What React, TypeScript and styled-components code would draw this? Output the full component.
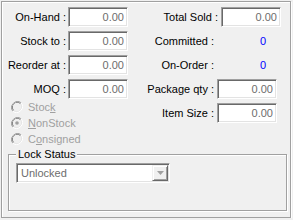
import React from "react";
import styled, { createGlobalStyle } from "styled-components";

const Global = createGlobalStyle`
  html, body { margin: 0; padding: 0; background: #f0f0f0; }
  body { font-family: "Liberation Sans", Arial, sans-serif; font-size: 11px; color: #000; }
  * { box-sizing: border-box; }
`;

const Frame = styled.div`
  margin: 1px 0 0 1px;
  width: 290px;
  height: 217px;
  border: 1px solid #a0a0a0;
  box-shadow: inset 1px 1px 0 #fff, 1px 1px 0 #fff;
  display: flex;
  flex-direction: column;
`;

const Top = styled.div`
  display: flex;
  padding: 5px 9px 0 2px;
`;

const LeftCol = styled.div`
  display: flex;
  flex-direction: column;
`;

const FieldGrid = styled.div`
  display: grid;
  grid-template-columns: 62px 60px;
  column-gap: 2px;
  row-gap: 4px;
  align-items: center;
`;

const Label = styled.span`
  text-align: right;
  white-space: nowrap;
  line-height: 20px;
`;

const Field = styled.input`
  width: ${(p) => p.width ?? 60}px;
  height: 20px;
  margin: 0;
  padding: 0 3px 0 2px;
  border-style: solid;
  border-width: 1px;
  border-color: #a0a0a0 #fff #fff #a0a0a0;
  box-shadow: inset 1px 1px 0 #696969, inset -1px -1px 0 #e3e3e3;
  background: #fff;
  color: #6d6d6d;
  font-family: "Liberation Sans", Arial, sans-serif;
  font-size: 11px;
  text-align: right;
  outline: none;
`;

const RightCol = styled.div`
  margin-left: auto;
  display: flex;
  flex-direction: column;
  gap: 4px;
`;

const RightRow = styled.div<{ $inset?: number }>`
  display: flex;
  justify-content: flex-end;
  align-items: center;
  gap: 3px;
  height: 20px;
  padding-right: ${(p) => p.$inset ?? 0}px;
`;

const Value = styled.span`
  width: 60px;
  text-align: right;
  padding-right: 11px;
  color: #0000ff;
  line-height: 20px;
`;

const RadioList = styled.div`
  display: flex;
  flex-direction: column;
  padding-left: 7px;
`;

const RadioRow = styled.label`
  display: flex;
  align-items: center;
  gap: 5px;
  height: 16px;
  color: #a0a0a0;
  white-space: nowrap;
  u { text-decoration: underline; text-underline-offset: 1px; }
`;

const GroupBox = styled.div`
  position: relative;
  margin: 7px 0 0 6px;
  width: 279px;
  height: 57px;
  border: 1px solid #a0a0a0;
  box-shadow: inset 1px 1px 0 #fff, 1px 1px 0 #fff;
  padding: 8px 0 0 7px;
`;

const Legend = styled.span`
  position: absolute;
  left: 7px;
  top: -7px;
  padding: 0 2px;
  background: #f0f0f0;
  line-height: 13px;
  white-space: nowrap;
`;

const Combo = styled.div`
  width: 154px;
  height: 20px;
  display: flex;
  align-items: stretch;
  border-style: solid;
  border-width: 1px;
  border-color: #a0a0a0 #fff #fff #a0a0a0;
  box-shadow: inset 1px 1px 0 #696969, inset -1px -1px 0 #e3e3e3;
  background: #fff;
  padding: 1px;
`;

const ComboText = styled.span`
  flex: 1;
  padding-left: 3px;
  line-height: 16px;
  color: #6d6d6d;
`;

const ComboButton = styled.span`
  width: 16px;
  height: 16px;
  background: #f0f0f0;
  border-style: solid;
  border-width: 1px;
  border-color: #f0f0f0 #696969 #696969 #f0f0f0;
  box-shadow: inset 1px 1px 0 #fff, inset -1px -1px 0 #a0a0a0;
  display: flex;
  align-items: center;
  justify-content: center;
`;

const Radio = ({ checked }: { checked?: boolean }) => (
  <svg width="12" height="12" viewBox="0 0 12 12">
    <path d="M10.2 1.8 A6 6 0 0 0 1.8 10.2" fill="none" stroke="#a0a0a0" strokeWidth="1" />
    <path d="M1.8 10.2 A6 6 0 0 0 10.2 1.8" fill="none" stroke="#fff" strokeWidth="1" />
    <path d="M9.5 2.5 A5 5 0 0 0 2.5 9.5" fill="none" stroke="#696969" strokeWidth="1" />
    <path d="M2.5 9.5 A5 5 0 0 0 9.5 2.5" fill="none" stroke="#e3e3e3" strokeWidth="1" />
    <circle cx="6" cy="6" r="4.2" fill="#f0f0f0" />
    {checked && <circle cx="6" cy="6" r="1.8" fill="#a0a0a0" />}
  </svg>
);

const leftFields = ["On-Hand :", "Stock to :", "Reorder at :", "MOQ :"];

export default function App() {
  return (
    <>
      <Global />
      <Frame>
        <Top>
          <LeftCol>
            <FieldGrid>
              {leftFields.map((l) => (
                <React.Fragment key={l}>
                  <Label>{l}</Label>
                  <Field readOnly value="0.00" />
                </React.Fragment>
              ))}
            </FieldGrid>
            <RadioList>
              <RadioRow>
                <Radio />
                <span>
                  Stoc<u>k</u>
                </span>
              </RadioRow>
              <RadioRow>
                <Radio checked />
                <span>
                  <u>N</u>onStock
                </span>
              </RadioRow>
              <RadioRow>
                <Radio />
                <span>
                  C<u>o</u>nsigned
                </span>
              </RadioRow>
            </RadioList>
          </LeftCol>
          <RightCol>
            <RightRow>
              <Label>Total Sold :</Label>
              <Field readOnly value="0.00" />
            </RightRow>
            <RightRow $inset={4}>
              <Label>Committed :</Label>
              <Value>0</Value>
            </RightRow>
            <RightRow $inset={4}>
              <Label>On-Order :</Label>
              <Value>0</Value>
            </RightRow>
            <RightRow $inset={4}>
              <Label>Package qty :</Label>
              <Field readOnly value="0.00" />
            </RightRow>
            <RightRow $inset={4}>
              <Label>Item Size :</Label>
              <Field readOnly value="0.00" />
            </RightRow>
          </RightCol>
        </Top>
        <GroupBox>
          <Legend>Lock Status</Legend>
          <Combo>
            <ComboText>Unlocked</ComboText>
            <ComboButton>
              <svg width="7" height="4" viewBox="0 0 7 4">
                <path d="M0 0 H7 L3.5 4 Z" fill="#a0a0a0" />
              </svg>
            </ComboButton>
          </Combo>
        </GroupBox>
      </Frame>
    </>
  );
}
